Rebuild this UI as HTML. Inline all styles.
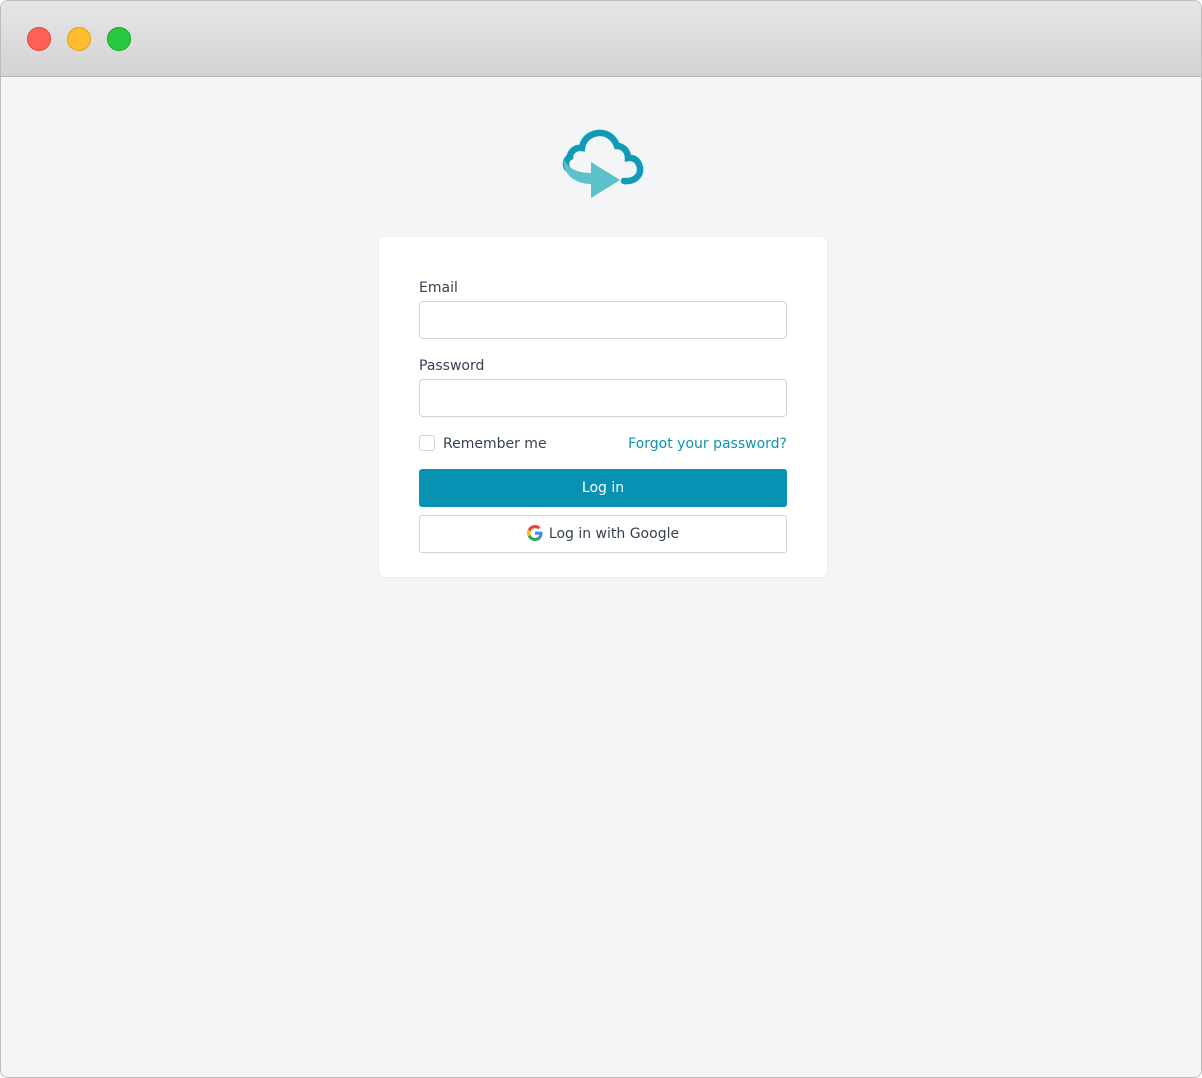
<!DOCTYPE html>
<html><head><style>
*{box-sizing:border-box;margin:0;padding:0}
body{width:1202px;height:1078px;background:#fff;font-family:"DejaVu Sans",sans-serif;font-size:14px;color:#374151;overflow:hidden}
.win{position:absolute;left:0;top:0;width:1202px;height:1078px;border:1px solid #bdbdbd;border-radius:8px;overflow:hidden;background:#f3f5f7}
.bar{height:76px;background:linear-gradient(#e6e6e6,#d3d3d3);border-bottom:1px solid #b5b5b5;position:relative}
.dot{position:absolute;top:26px;width:24px;height:24px;border-radius:50%}
.card{position:absolute;left:378px;top:236px;width:448px;height:340px;background:#fff;border-radius:6px;box-shadow:0 1px 2px rgba(0,0,0,.06)}
label{position:absolute;left:40px;font-size:14px;color:#374151}
.inp{position:absolute;left:40px;width:368px;height:38px;border:1px solid #d1d5db;border-radius:4px}
.btn{position:absolute;left:40px;width:368px;height:38px;border-radius:3px;text-align:center;line-height:38px}
</style></head><body>
<div class="win">
<div class="bar">
<div class="dot" style="left:26px;background:#fe5f57;border:1px solid #e2463f"></div>
<div class="dot" style="left:66px;background:#febc2e;border:1px solid #e1a116"></div>
<div class="dot" style="left:106px;background:#28c840;border:1px solid #14a82a"></div>
</div>
<svg style="position:absolute;left:559px;top:128px" width="86" height="72" viewBox="0 0 86 72">
<path d="M64 52 C74 53 81 47 80 39 C79 32 74 28 68 29 C68 22 63 17 57 17 C54 8 46 3 38 4 C29 5 23 11 22 19 C15 18 10 23 10 28 C6 30 5 35 7 39" fill="none" stroke="#0f9bb5" stroke-width="6.5" stroke-linecap="round"/>
<path d="M4 30 C2 44 14 55 31 55 L31 69 L60 51 L31 33 L31 44 C18 44 8 40 4 30Z" fill="#5cc1cb"/>
</svg>
<div class="card">
<label style="top:43px">Email</label>
<div class="inp" style="top:64px"></div>
<label style="top:121px">Password</label>
<div class="inp" style="top:142px"></div>
<div style="position:absolute;left:40px;top:198px;width:16px;height:16px;border:1px solid #d1d5db;border-radius:3px"></div>
<div style="position:absolute;left:64px;top:199px">Remember me</div>
<div style="position:absolute;right:40px;top:199px;color:#0e93ad">Forgot your password?</div>
<div class="btn" style="top:232px;background:#0891b2;color:#fff">Log in</div>
<div class="btn" style="top:278px;border:1px solid #d1d5db;color:#374151;line-height:36px">
<svg width="16" height="16" viewBox="0 0 48 48" style="vertical-align:-3px;margin-right:6px"><path fill="#EA4335" d="M24 9.5c3.5 0 6.6 1.2 9.1 3.6l6.8-6.8C35.8 2.4 30.3 0 24 0 14.6 0 6.6 5.4 2.7 13.3l7.9 6.1C12.5 13.6 17.8 9.5 24 9.5z"/><path fill="#4285F4" d="M46.5 24.5c0-1.6-.1-3.1-.4-4.5H24v9h12.7c-.6 2.9-2.2 5.4-4.7 7.1l7.6 5.9c4.4-4.1 6.9-10.1 6.9-17.5z"/><path fill="#FBBC05" d="M10.6 28.6c-.5-1.4-.8-3-.8-4.6s.3-3.200.8-4.6l-7.9-6.1C1 16.6 0 20.2 0 24s1 7.4 2.7 10.7l7.9-6.1z"/><path fill="#34A853" d="M24 48c6.5 0 11.9-2.1 15.9-5.8l-7.6-5.9c-2.1 1.4-4.9 2.3-8.3 2.3-6.2 0-11.5-4.1-13.4-9.9l-7.9 6.1C6.6 42.6 14.6 48 24 48z"/></svg>Log in with Google</div>
</div>
</div>
</body></html>
